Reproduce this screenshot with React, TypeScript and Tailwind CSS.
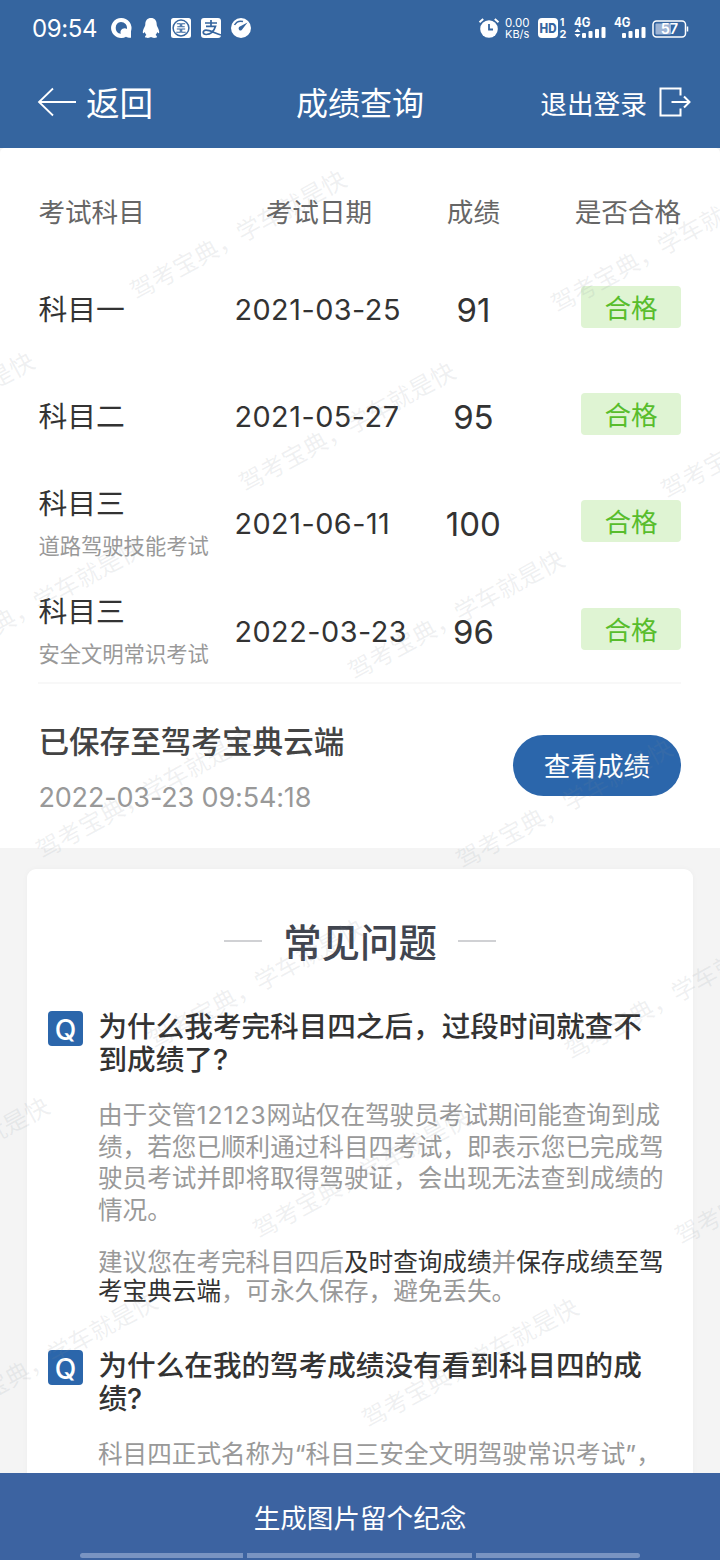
interface ExamResult {
  subject: string;
  note?: string;
  date: string;
  score: number;
}

const RESULTS: ExamResult[] = [
  { subject: "科目一", date: "2021-03-25", score: 91 },
  { subject: "科目二", date: "2021-05-27", score: 95 },
  { subject: "科目三", note: "道路驾驶技能考试", date: "2021-06-11", score: 100 },
  { subject: "科目三", note: "安全文明常识考试", date: "2022-03-23", score: 96 },
];

// center of the first glyph of each watermark, relative to the content area
const WATERMARKS = [
  [142, 140],
  [563, 153],
  [-170, 322],
  [251, 332],
  [673, 339],
  [-61, 509],
  [360, 520],
  [48, 699],
  [468, 709],
  [160, 889],
  [577, 900],
  [-155, 1067],
  [265, 1079],
  [687, 1085],
  [-47, 1262],
  [374, 1268],
];

function Watermark() {
  return (
    <div className="pointer-events-none absolute inset-0 overflow-hidden">
      {WATERMARKS.map(([x, y]) => (
        <span
          key={`${x}-${y}`}
          className="absolute origin-[12px_12px] -rotate-[28.7deg] whitespace-nowrap text-[24.2px] leading-[24px] text-[#808c96]/13"
          style={{ left: x - 11, top: y - 12 }}
        >
          驾考宝典，学车就是快
        </span>
      ))}
    </div>
  );
}

function AppIcons() {
  return (
    <svg width="142" height="22" viewBox="0 0 142 22" fill="#fff">
      {/* browser */}
      <path
        fillRule="evenodd"
        d="M11 1a10 10 0 1 0 5 18.700c1.500.9 3 1.100 5 1v-6.500A10 10 0 0 0 11 1zm0 3.900a6 6 0 0 1 5.900 7c-1.800-1.300-4.800-.6-6 1.600-.6 1.200-.5 2.400 0 3.300A6 6 0 0 1 11 4.900z"
      />
      {/* penguin */}
      <path d="M41 1c-3.700 0-5.700 2.700-5.700 6.400 0 1-.3 1.700-.8 2.600-1.100 1.900-1.800 4.100-1.700 5.600.1 1.100 1 .9 1.900-.6.300 1.200.9 2.100 1.700 2.900-1 .5-1.500 1.300-1.300 2.100.3 1.100 4.700 1.200 5.900.1 1.200 1.100 5.600 1 5.900-.1.200-.8-.3-1.600-1.300-2.100.8-.8 1.400-1.700 1.700-2.900.9 1.500 1.800 1.700 1.900.6.100-1.500-.6-3.700-1.700-5.600-.5-.9-.8-1.600-.8-2.600C46.700 3.700 44.700 1 41 1z" />
      {/* bank */}
      <rect x="61" y="1" width="20" height="20" rx="2.500" />
      <g fill="none" stroke="#35659f">
        <circle cx="71" cy="11" r="7.900" strokeWidth="1.500" />
        <path
          d="M66.800 6.800h3.500v3h-3M66.300 15.200h4V12h-3.500M75.200 6.800h-3.500v3h3M75.700 15.200h-4V12h3.500"
          strokeWidth="1.100"
        />
      </g>
      {/* pay */}
      <rect x="91" y="1" width="20" height="20" rx="3" />
      <g fill="none" stroke="#35659f" strokeWidth="1.700">
        <path d="M95 6h12M101 3v6M96 9.300h9.500c-1.500 5-5 8.200-9.300 8.200-4 0-3.800-4.300-.2-4.300 4.500 0 9 3.300 15 4.800" />
      </g>
      {/* gauge */}
      <circle cx="131" cy="11" r="10" />
      <path d="M124.500 8a7.500 7.500 0 0 1 8.500-3.500" fill="none" stroke="#35659f" strokeWidth="1.500" />
      <path d="M137.500 5.500l-5 6.600a2 2 0 1 1-2.600-2.500z" fill="#35659f" />
    </svg>
  );
}

function SignalBars() {
  return (
    <>
      <rect x="8" y="16" width="4" height="5" rx="1" />
      <rect x="14.500" y="14" width="4" height="7" rx="1" />
      <rect x="21" y="12" width="4" height="9" rx="1" />
      <rect x="27.500" y="10" width="4" height="11" rx="1" />
    </>
  );
}

function StatusBar() {
  return (
    <div className="flex h-14 items-center pl-[32px] pr-[31px]">
      <span className="w-[78px] pt-[2px] text-[24px] leading-6 tracking-[-0.4px]">09:54</span>
      <AppIcons />
      <div className="ml-auto flex items-center">
        <svg width="22" height="22" viewBox="0 0 22 22">
          <circle cx="11" cy="12" r="8.800" fill="#fff" />
          <path d="M1.500 5.200 5.200 2M20.500 5.200 16.800 2" stroke="#fff" strokeWidth="2" />
          <path d="M11 7v5.500h4" fill="none" stroke="#35659f" strokeWidth="1.800" />
        </svg>
        <div className="ml-[5px] mr-[1px] w-8 pt-[1px] text-[11.5px] leading-[11px]">
          <div>0.00</div>
          <div className="text-[11px]">KB/s</div>
        </div>
        <svg className="overflow-visible" width="30" height="22" viewBox="0 0 30 22" fill="#fff">
          <rect x="0" y="1" width="20" height="20" rx="4" />
          <text x="1.500" y="16" fontSize="13" fontWeight="800" fill="#35659f" textLength="17" lengthAdjust="spacingAndGlyphs">
            HD
          </text>
          <text x="22" y="9" fontSize="10" fontWeight="700">
            1
          </text>
          <text x="21.500" y="21" fontSize="11" fontWeight="700">
            2
          </text>
        </svg>
        <svg className="ml-[6px] overflow-visible" width="34" height="22" viewBox="0 0 34 22" fill="#fff">
          <text x="0" y="10" fontSize="12.500" fontWeight="700" textLength="16.500" lengthAdjust="spacingAndGlyphs">
            4G
          </text>
          <path d="M3.500 11.500l3 3.500h-6zM3.500 20.500l3-3.500h-6z" />
          <SignalBars />
        </svg>
        <svg className="ml-[6px] overflow-visible" width="34" height="22" viewBox="0 0 34 22" fill="#fff">
          <text x="0" y="10" fontSize="12.500" fontWeight="700" textLength="16.500" lengthAdjust="spacingAndGlyphs">
            4G
          </text>
          <SignalBars />
        </svg>
        <svg className="ml-[4px] mt-[2px]" width="37" height="20" viewBox="0 0 37 20">
          <rect x="1" y="2" width="32.500" height="16" rx="3.500" fill="none" stroke="#fff" strokeWidth="1.500" />
          <rect x="3.500" y="4.500" width="15.500" height="11" rx="1" fill="#9db4d5" />
          <path d="M35.500 7.500v5" stroke="#fff" strokeWidth="1.500" />
          <text x="17.500" y="15.300" textAnchor="middle" fontSize="14.500" fontWeight="600" fill="#fff">
            57
          </text>
        </svg>
      </div>
    </div>
  );
}

function NavBar() {
  return (
    <div className="grid h-[92px] grid-cols-[1fr_128px_1fr] items-center pl-[37px] pr-[29px] pt-[3px]">
      <button className="flex items-center gap-[9px] text-[33.6px] leading-10">
        <svg className="-mt-1" width="40" height="30" viewBox="0 0 40 30" fill="none" stroke="#fff" strokeWidth="1.800">
          <path d="M39 15H2M16 1.500 2 15l14 13.500" />
        </svg>
        返回
      </button>
      <h1 className="-ml-1 whitespace-nowrap text-[32px] leading-10">成绩查询</h1>
      <button className="flex items-center justify-end gap-[12px] whitespace-nowrap text-[26.7px] leading-10">
        退出登录
        <svg className="-mt-1" width="32" height="30" viewBox="0 0 32 30" fill="none" stroke="#fff" strokeWidth="2">
          <path d="M21.500 8.500V1.500H1.500v27h20v-7M12.500 15H30M25 9.500l5.500 5.500-5.500 5.500" />
        </svg>
      </button>
    </div>
  );
}

function ResultTable() {
  return (
    <div className="border-b-2 border-[#f8f8f8] pt-[43px]">
      <div className="grid h-[42px] grid-cols-[196px_168px_142px_1fr] items-center text-[26.6px] leading-10 text-[#666]">
        <span>考试科目</span>
        <span className="pl-[1px] text-center">考试日期</span>
        <span className="text-center">成绩</span>
        <span className="text-right">是否合格</span>
      </div>
      <div className="-mb-[3px] pt-[23px]">
        {RESULTS.map((r) => (
          <div
            key={r.date}
            className="grid h-[107.35px] grid-cols-[196px_168px_142px_1fr] items-center whitespace-nowrap text-[#333]"
          >
            <div>
              <div className="text-[28.8px] leading-[42px]">{r.subject}</div>
              {r.note && <div className="-mb-[2px] text-[21.3px] leading-[42px] text-[#999]">{r.note}</div>}
            </div>
            <span className="text-[28.8px] leading-10 tracking-[0.5px]">{r.date}</span>
            <span className="text-center text-[33px] leading-10">{r.score}</span>
            <span className="mb-[6px] h-[42px] w-[100px] justify-self-end rounded-[4px] bg-[#dff4d3] text-center text-[26.6px] leading-[45px] text-[#58bd2c]">
              合格
            </span>
          </div>
        ))}
      </div>
    </div>
  );
}

function SavedInfo() {
  return (
    <div className="flex h-[162px] items-center justify-between">
      <div className="pt-[10px]">
        <p className="text-[30.6px] font-medium leading-[46px] text-[#444]">已保存至驾考宝典云端</p>
        <p className="mt-[10px] text-[27px] leading-[46px] tracking-[-0.15px] text-[#999]">2022-03-23 09:54:18</p>
      </div>
      <button className="h-[61px] w-[168px] rounded-full bg-[#2b66ab] text-[26.6px] leading-[62px] text-white">
        查看成绩
      </button>
    </div>
  );
}

function Question({ children }: { children: React.ReactNode }) {
  return (
    <div className="flex gap-[15.5px] whitespace-nowrap">
      <span className="mt-[1px] h-[35px] w-[35px] shrink-0 rounded-[4px] bg-[#2b66ab] text-center text-[28px] font-medium leading-[38px] text-white">
        Q
      </span>
      <h3 className="text-[28.6px] font-medium leading-[33px] text-[#333]">{children}</h3>
    </div>
  );
}

function Faq() {
  return (
    <section className="mx-[27px] mt-[21px] h-[700px] rounded-[9px] bg-white pl-[21px] pt-[50px] shadow-[0_0_6px_rgba(0,0,0,0.03)]">
      <div className="flex h-12 items-center justify-center gap-[21px] pr-[21px]">
        <span className="-mt-1 h-[2px] w-[38px] bg-[#d0d1d4]" />
        <h2 className="text-[38.4px] font-medium leading-[48px] text-[#41454f]">常见问题</h2>
        <span className="-mt-1 h-[2px] w-[38px] bg-[#d0d1d4]" />
      </div>
      <div className="mt-[43px]">
        <Question>
          为什么我考完科目四之后，过段时间就查不
          <br />
          到成绩了?
        </Question>
        <div className="whitespace-nowrap pl-[50px] text-[24.6px] text-[#999]">
          <p className="mt-[24px] leading-[31.7px]">
            由于交管<span className="tracking-[1px]">12123</span>网站仅在驾驶员考试期间能查询到成
            <br />
            绩，若您已顺利通过科目四考试，即表示您已完成驾
            <br />
            驶员考试并即将取得驾驶证，会出现无法查到成绩的
            <br />
            情况。
          </p>
          <p className="mt-[21px] leading-[29px]">
            建议您在考完科目四后<span className="text-[#333]">及时查询成绩</span>并
            <span className="text-[#333]">
              保存成绩至驾
              <br />
              考宝典云端
            </span>
            ，可永久保存，避免丢失。
          </p>
        </div>
      </div>
      <div className="mt-[43px]">
        <Question>
          为什么在我的驾考成绩没有看到科目四的成
          <br />
          绩?
        </Question>
        <p className="mt-[24px] whitespace-nowrap pl-[50px] text-[24.6px] leading-[31.7px] text-[#999]">
          科目四正式名称为“科目三安全文明驾驶常识考试”，
        </p>
      </div>
    </section>
  );
}

export default function App() {
  return (
    <div className="flex h-[1560px] w-[720px] flex-col overflow-hidden bg-[#f4f4f4] font-['Inter','Noto_Sans_CJK_SC',sans-serif]">
      <header className="h-[148px] shrink-0 bg-[#35659f] text-white">
        <StatusBar />
        <NavBar />
      </header>

      <main className="relative min-h-0 flex-1 overflow-hidden">
        <section className="h-[700px] rounded-t-[5px] bg-white pl-[38.4px] pr-[39px]">
          <ResultTable />
          <SavedInfo />
        </section>
        <Faq />
        <Watermark />
      </main>

      <footer className="flex h-[87px] shrink-0 flex-col items-center bg-[#3c63a1] text-white">
        <button className="h-20 pt-[5px] text-[26.6px] leading-[80px]">生成图片留个纪念</button>
        <div className="flex h-[5px] w-[560px] shrink-0 gap-1">
          <span className="w-[163px] rounded-l-full bg-[#7994c2]" />
          <span className="flex-1 bg-[#7994c2]" />
          <span className="w-[164px] rounded-r-full bg-[#7994c2]" />
        </div>
      </footer>
    </div>
  );
}
